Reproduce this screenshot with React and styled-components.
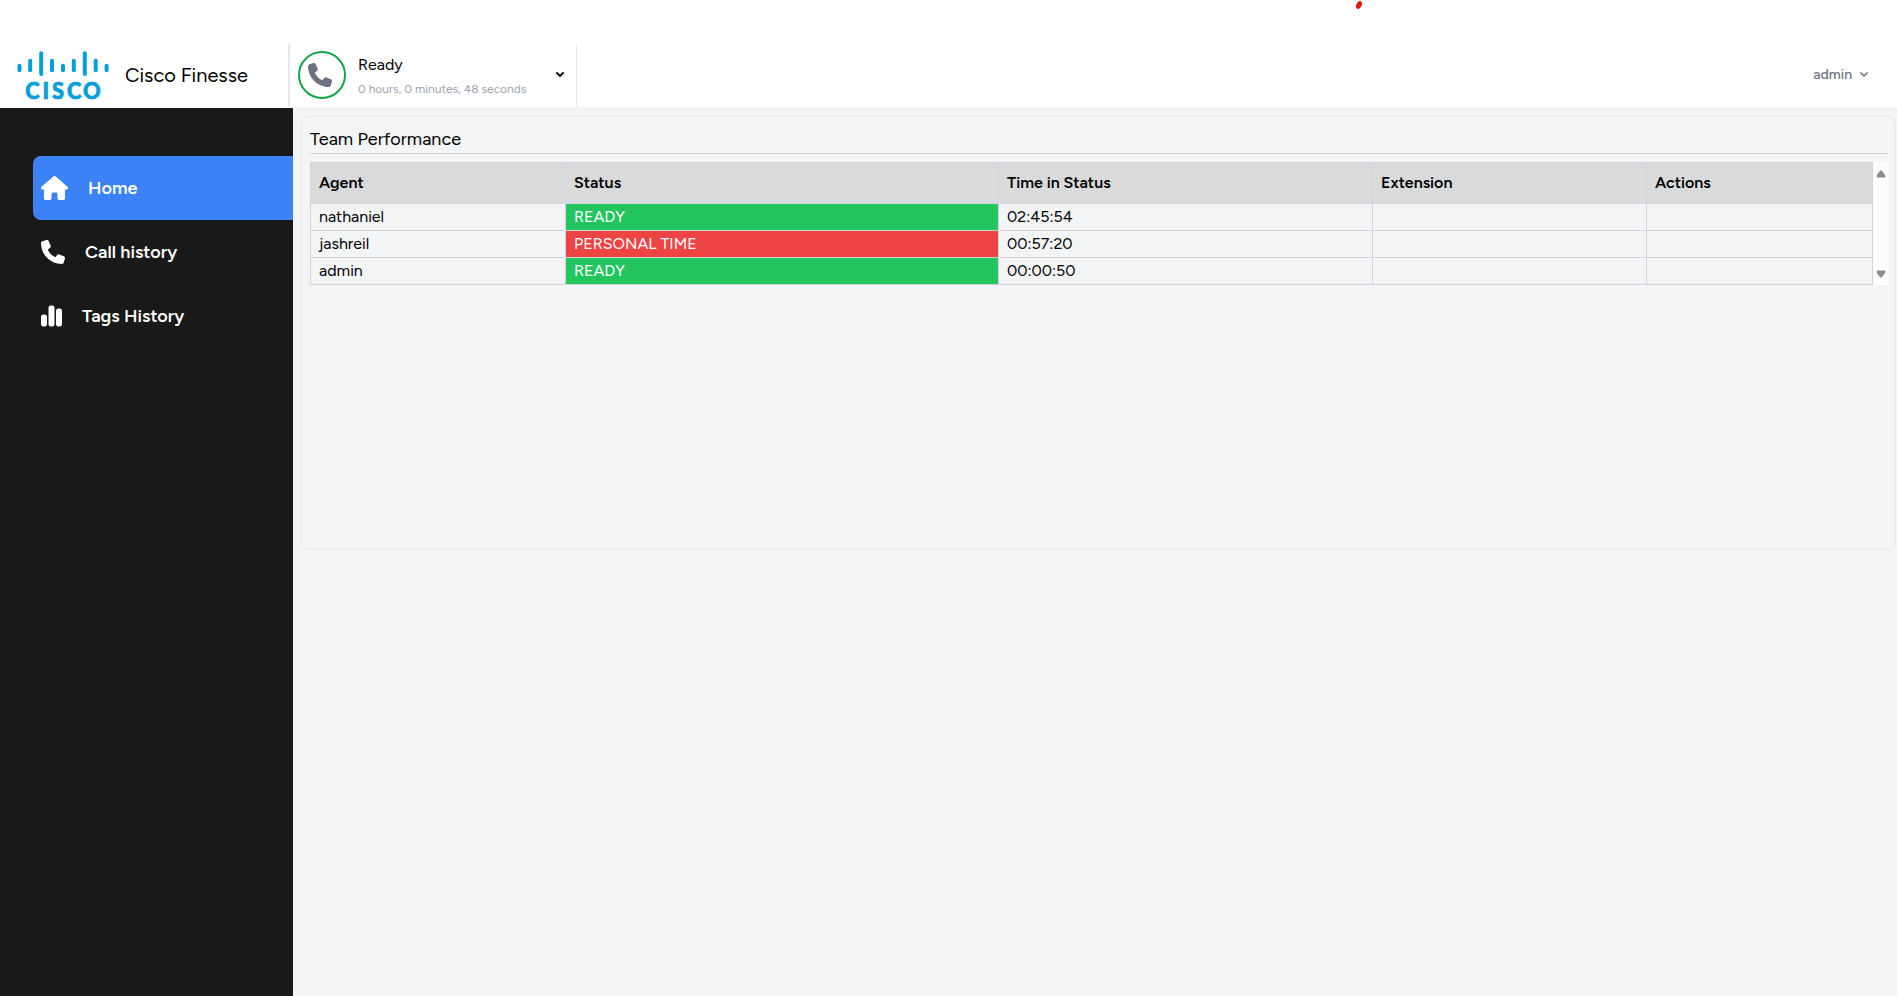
import React from "react";
import styled, { createGlobalStyle } from "styled-components";
import { FaHouse, FaPhone, FaChartSimple } from "react-icons/fa6";

const GlobalStyle = createGlobalStyle`
  *, *::before, *::after { box-sizing: border-box; }
  body {
    margin: 0;
    background: #fff;
    color: #000;
    font-family: Figtree, Lato, "Liberation Sans", sans-serif;
    font-size: 16px;
    line-height: 24px;
  }
`;

const Page = styled.div`
  display: flex;
  flex-direction: column;
  height: 996px;
  overflow: hidden;
`;

const Notice = styled.div`
  flex: none;
  height: 44px;
  padding-left: 1355px;
  svg { display: block; }
`;

const Header = styled.header`
  flex: none;
  display: flex;
  height: 63px;
`;

const Brand = styled.div`
  width: 288px;
  display: flex;
  align-items: flex-start;
  padding: 6px 0 0 16px;
  svg { display: block; flex: none; }
`;

const BrandName = styled.span`
  margin: 11px 0 0 15px;
  font-size: 20px;
  line-height: 28px;
  white-space: nowrap;
`;

const StatusPicker = styled.div`
  width: 289px;
  display: flex;
  align-items: flex-start;
  padding: 7px 11px 0 8px;
  border-left: 2px solid #e5e7eb;
  border-right: 1px solid #e5e7eb;
`;

const StatusRing = styled.div`
  width: 48px;
  height: 48px;
  padding: 10px 8px;
  border: 2px solid #16a34a;
  border-radius: 50%;
  color: #6b7280;
  svg { display: block; }
`;

const StatusText = styled.div`
  flex: 1;
  padding: 2px 0 0 12px;
`;

const StatusTime = styled.div`
  margin-top: 4px;
  font-size: 12px;
  line-height: 16px;
  color: #9ca3af;
  white-space: nowrap;
`;

const StatusArrow = styled.div`
  padding-top: 20px;
  svg { display: block; }
`;

const UserMenu = styled.div`
  margin-left: auto;
  padding: 21px 28px 0 0;
  display: flex;
  align-items: flex-start;
  gap: 7px;
  font-size: 14px;
  line-height: 20px;
  font-weight: 500;
  color: #6b7280;
  svg { display: block; margin-top: 6px; }
`;

const Body = styled.div`
  flex: 1;
  display: flex;
  background: #f3f4f6;
`;

const Sidebar = styled.nav`
  flex: none;
  width: 293px;
  padding: 48px 0 0 33px;
  border-top: 1px solid #fff;
  background: #191919;
`;

const NavItem = styled.a`
  display: flex;
  align-items: center;
  gap: 20px;
  height: 64px;
  padding-left: 8px;
  border-radius: 8px 0 0 8px;
  background: ${(p) => (p.$active ? "#3b82f6" : "transparent")};
  color: #fff;
  font-size: 18px;
  font-weight: 600;
  line-height: 28px;
`;

const NavIcon = styled.span`
  width: ${(p) => p.$width}px;
  height: 24px;
  svg { display: block; width: 100%; height: 100%; }
`;

const Main = styled.main`
  flex: 1;
  min-width: 0;
  padding: 9px 1px 0 8px;
`;

const Card = styled.section`
  height: 434px;
  padding: 8px 7px 0 8px;
  border: 1px solid #e5e7eb;
  border-radius: 8px;
`;

const CardTitle = styled.h2`
  height: 29px;
  margin: 0 0 8px;
  border-bottom: 1px solid #d1d5db;
  font-size: 18px;
  font-weight: 400;
  line-height: 28px;
`;

const TableArea = styled.div`
  display: flex;
`;

const Table = styled.table`
  width: 1563px;
  table-layout: fixed;
  border-collapse: separate;
  border-spacing: 0;
  border: solid #d1d5db;
  border-width: 1px 0 0 1px;
`;

const HeadCell = styled.th`
  width: ${(p) => p.$width}px;
  height: 41px;
  padding: 0 8px;
  border: solid #d1d5db;
  border-width: 0 1px 1px 0;
  background: #d9dadc;
  font-weight: 600;
  text-align: left;
`;

const Cell = styled.td`
  height: 27px;
  padding: 1px 8px;
  border: solid #d1d5db;
  border-width: 0 1px 1px 0;
`;

const STATUS_COLORS = { READY: "#22c55e", "PERSONAL TIME": "#ef4444" };

const StatusCell = styled(Cell)`
  background: ${(p) => STATUS_COLORS[p.$status]};
  color: #fff;
`;

const ScrollTrack = styled.div`
  width: 15px;
  display: flex;
  flex-direction: column;
  justify-content: space-between;
  align-items: flex-start;
  padding: 7.5px 0 7.5px 2.5px;
  background: #fcfcfc;
  svg { display: block; }
`;

const BARS = [
  [19.5, 64, 72], [30.2, 59, 72], [41.2, 51.5, 75.7], [52, 59, 72], [63, 64, 72],
  [73.8, 59, 72], [84.8, 51.5, 75.7], [95.7, 59, 72], [106.6, 64, 72],
];

const CiscoLogo = () => (
  <svg width="94" height="57" viewBox="16 50 94 57">
    <g stroke="#049fd9" strokeWidth="4" strokeLinecap="round">
      {BARS.map(([x, top, bottom]) => (
        <line key={x} x1={x} x2={x} y1={top + 1.8} y2={bottom - 1.8} />
      ))}
    </g>
    <text
      x="25.2 42.6 52 67 83"
      y="98.5"
      fill="#049fd9"
      stroke="#049fd9"
      strokeWidth="0.7"
      fontFamily="Lato, sans-serif"
      fontWeight="900"
      fontSize="21.8"
    >
      CISCO
    </text>
  </svg>
);

const Chevron = ({ width }) => (
  <svg width="10" height="7" viewBox="0 0 10 7" fill="none" stroke="currentColor" strokeWidth={width}>
    <path d="M1.4 1.5 5 5l3.6-3.5" />
  </svg>
);

const ScrollArrow = ({ down }) => (
  <svg width="10" height="8" viewBox="0 0 10 8" fill="#8b8b8b">
    <path
      transform={down ? "rotate(180 5 4)" : undefined}
      d="M3.9.9Q5-.4 6.1.9L9 5Q10.2 7.4 8.3 7.5H1.7Q-.2 7.4 1 5Z"
    />
  </svg>
);

const NAV = [
  { label: "Home", icon: FaHouse, width: 27, active: true },
  { label: "Call history", icon: FaPhone, width: 24 },
  { label: "Tags History", icon: FaChartSimple, width: 21 },
];

const COLUMNS = [
  ["Agent", 255],
  ["Status", 433],
  ["Time in Status", 374],
  ["Extension", 274],
  ["Actions", 226],
];

const AGENTS = [
  ["nathaniel", "READY", "02:45:54"],
  ["jashreil", "PERSONAL TIME", "00:57:20"],
  ["admin", "READY", "00:00:50"],
];

export default function App() {
  return (
    <Page>
      <GlobalStyle />
      <Notice>
        <svg width="9" height="10" viewBox="0 0 9 10">
          <ellipse cx="4" cy="5" rx="2.7" ry="4.2" transform="rotate(24 4 5)" fill="#e8150f" />
        </svg>
      </Notice>
      <Header>
        <Brand>
          <CiscoLogo />
          <BrandName>Cisco Finesse</BrandName>
        </Brand>
        <StatusPicker>
          <StatusRing>
            <FaPhone size={24} />
          </StatusRing>
          <StatusText>
            <div>Ready</div>
            <StatusTime>0 hours, 0 minutes, 48 seconds</StatusTime>
          </StatusText>
          <StatusArrow>
            <Chevron width={1.8} />
          </StatusArrow>
        </StatusPicker>
        <UserMenu>
          admin
          <Chevron width={1.6} />
        </UserMenu>
      </Header>
      <Body>
        <Sidebar>
          {NAV.map(({ label, icon: Icon, width, active }) => (
            <NavItem key={label} $active={active}>
              <NavIcon $width={width}>
                <Icon />
              </NavIcon>
              {label}
            </NavItem>
          ))}
        </Sidebar>
        <Main>
          <Card>
            <CardTitle>Team Performance</CardTitle>
            <TableArea>
              <Table>
                <thead>
                  <tr>
                    {COLUMNS.map(([name, width]) => (
                      <HeadCell key={name} $width={width}>{name}</HeadCell>
                    ))}
                  </tr>
                </thead>
                <tbody>
                  {AGENTS.map(([name, status, time]) => (
                    <tr key={name}>
                      <Cell>{name}</Cell>
                      <StatusCell $status={status}>{status}</StatusCell>
                      <Cell>{time}</Cell>
                      <Cell />
                      <Cell />
                    </tr>
                  ))}
                </tbody>
              </Table>
              <ScrollTrack>
                <ScrollArrow />
                <ScrollArrow down />
              </ScrollTrack>
            </TableArea>
          </Card>
        </Main>
      </Body>
    </Page>
  );
}
